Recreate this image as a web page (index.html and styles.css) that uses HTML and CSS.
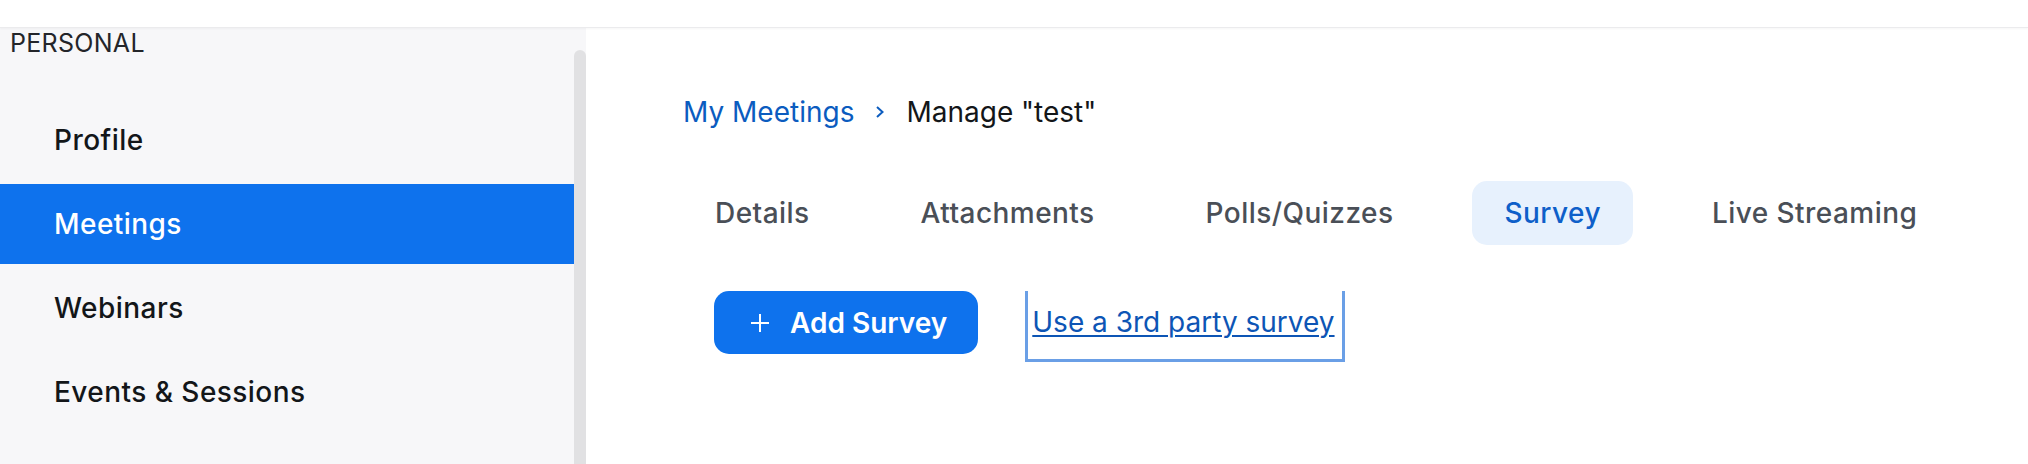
FILE: index.html
```html
<!DOCTYPE html>
<html lang="en">
<head>
<meta charset="utf-8">
<title>Manage "test"</title>
<link rel="stylesheet" href="styles.css">
</head>
<body>
<header class="topbar"></header>
<div class="layout">
  <aside class="sidebar">
    <div class="sidebar-inner">
      <div class="section-label">PERSONAL</div>
      <nav class="nav">
        <a class="nav-item">Profile</a>
        <a class="nav-item active">Meetings</a>
        <a class="nav-item">Webinars</a>
        <a class="nav-item">Events &amp; Sessions</a>
      </nav>
    </div>
    <div class="scroll-track"></div>
  </aside>
  <main class="main">
    <div class="breadcrumb">
      <a class="crumb-link">My Meetings</a>
      <svg class="chevron" width="10" height="12" viewBox="0 0 10 12"><path d="M2 1 L7.5 6 L2 11" fill="none" stroke="#0b5cbf" stroke-width="2"/></svg>
      <span class="crumb-current">Manage "test"</span>
    </div>
    <div class="tabs">
      <div class="tab">Details</div>
      <div class="tab">Attachments</div>
      <div class="tab">Polls/Quizzes</div>
      <div class="tab active">Survey</div>
      <div class="tab">Live Streaming</div>
    </div>
    <div class="actions">
      <button class="btn-primary">
        <svg class="plus" width="18" height="18" viewBox="0 0 18 18"><path d="M9 0 V18 M0 9 H18" stroke="#fff" stroke-width="2" fill="none"/></svg>
        <span>Add Survey</span>
      </button>
      <div class="link-box"><a class="third-party">Use a 3rd party survey</a></div>
    </div>
  </main>
</div>
</body>
</html>
```

FILE: styles.css
```css
* { box-sizing: border-box; }
html, body {
  margin: 0;
  padding: 0;
  width: 2028px;
  height: 464px;
  overflow: hidden;
  background: #ffffff;
  font-family: Inter, "Noto Sans", "Liberation Sans", sans-serif;
}
.topbar {
  height: 28px;
  background: #ffffff;
  border-bottom: 1px solid #ebebed;
  box-shadow: 0 1px 2px rgba(0, 0, 0, 0.04);
  position: relative;
  z-index: 1;
}
.layout {
  display: flex;
  height: 436px;
}
.sidebar {
  width: 586px;
  flex: none;
  background: #f7f7f9;
  display: flex;
}
.sidebar-inner {
  width: 574px;
  flex: none;
}
.scroll-track {
  width: 12px;
  flex: none;
  margin-top: 22px;
  background: #e1e1e3;
  border-radius: 6px 6px 0 0;
}
.section-label {
  font-size: 25px;
  line-height: 30px;
  letter-spacing: 0.3px;
  color: #23252a;
  padding-left: 10px;
}
.nav {
  display: flex;
  flex-direction: column;
  gap: 4px;
  margin-top: 42px;
}
.nav-item {
  height: 80px;
  display: flex;
  align-items: center;
  padding-left: 54px;
  font-size: 28px;
  font-weight: 500;
  letter-spacing: 0.45px;
  color: #131619;
}
.nav-item.active {
  background: #0e72ed;
  color: #ffffff;
}
.main {
  flex: 1;
  padding-left: 97px;
  padding-top: 67px;
}
.breadcrumb {
  display: flex;
  align-items: center;
  gap: 21px;
  font-size: 28px;
  line-height: 34px;
}
.crumb-link { color: #0b5cbf; }
.crumb-current { color: #131619; }
.chevron { display: block; }
.tabs {
  display: flex;
  gap: 47px;
  margin-top: 52px;
}
.tab {
  height: 64px;
  padding: 0 32px;
  display: flex;
  align-items: center;
  font-size: 28px;
  font-weight: 500;
  letter-spacing: 0.45px;
  color: #4a4f57;
  border-radius: 15px;
}
.tab.active {
  background: #e7f1fd;
  color: #0e5fc9;
}
.actions {
  display: flex;
  align-items: flex-start;
  margin-top: 46px;
  padding-left: 31px;
}
.btn-primary {
  height: 63px;
  display: flex;
  align-items: center;
  gap: 21px;
  padding: 0 31px 0 37px;
  background: #0e72ed;
  color: #ffffff;
  border: none;
  border-radius: 15px;
  font-family: inherit;
  font-size: 28px;
  font-weight: 600;
}
.plus { display: block; }
.link-box {
  margin-left: 47px;
  width: 320px;
  height: 71px;
  border: 3px solid #6a9fe6;
  border-top: none;
  padding: 14px 0 0 4px;
}
.third-party {
  font-size: 28px;
  line-height: 34px;
  color: #0d55b5;
  text-decoration: underline;
  text-decoration-thickness: 2px;
  text-underline-offset: 3px;
  white-space: nowrap;
}
```
